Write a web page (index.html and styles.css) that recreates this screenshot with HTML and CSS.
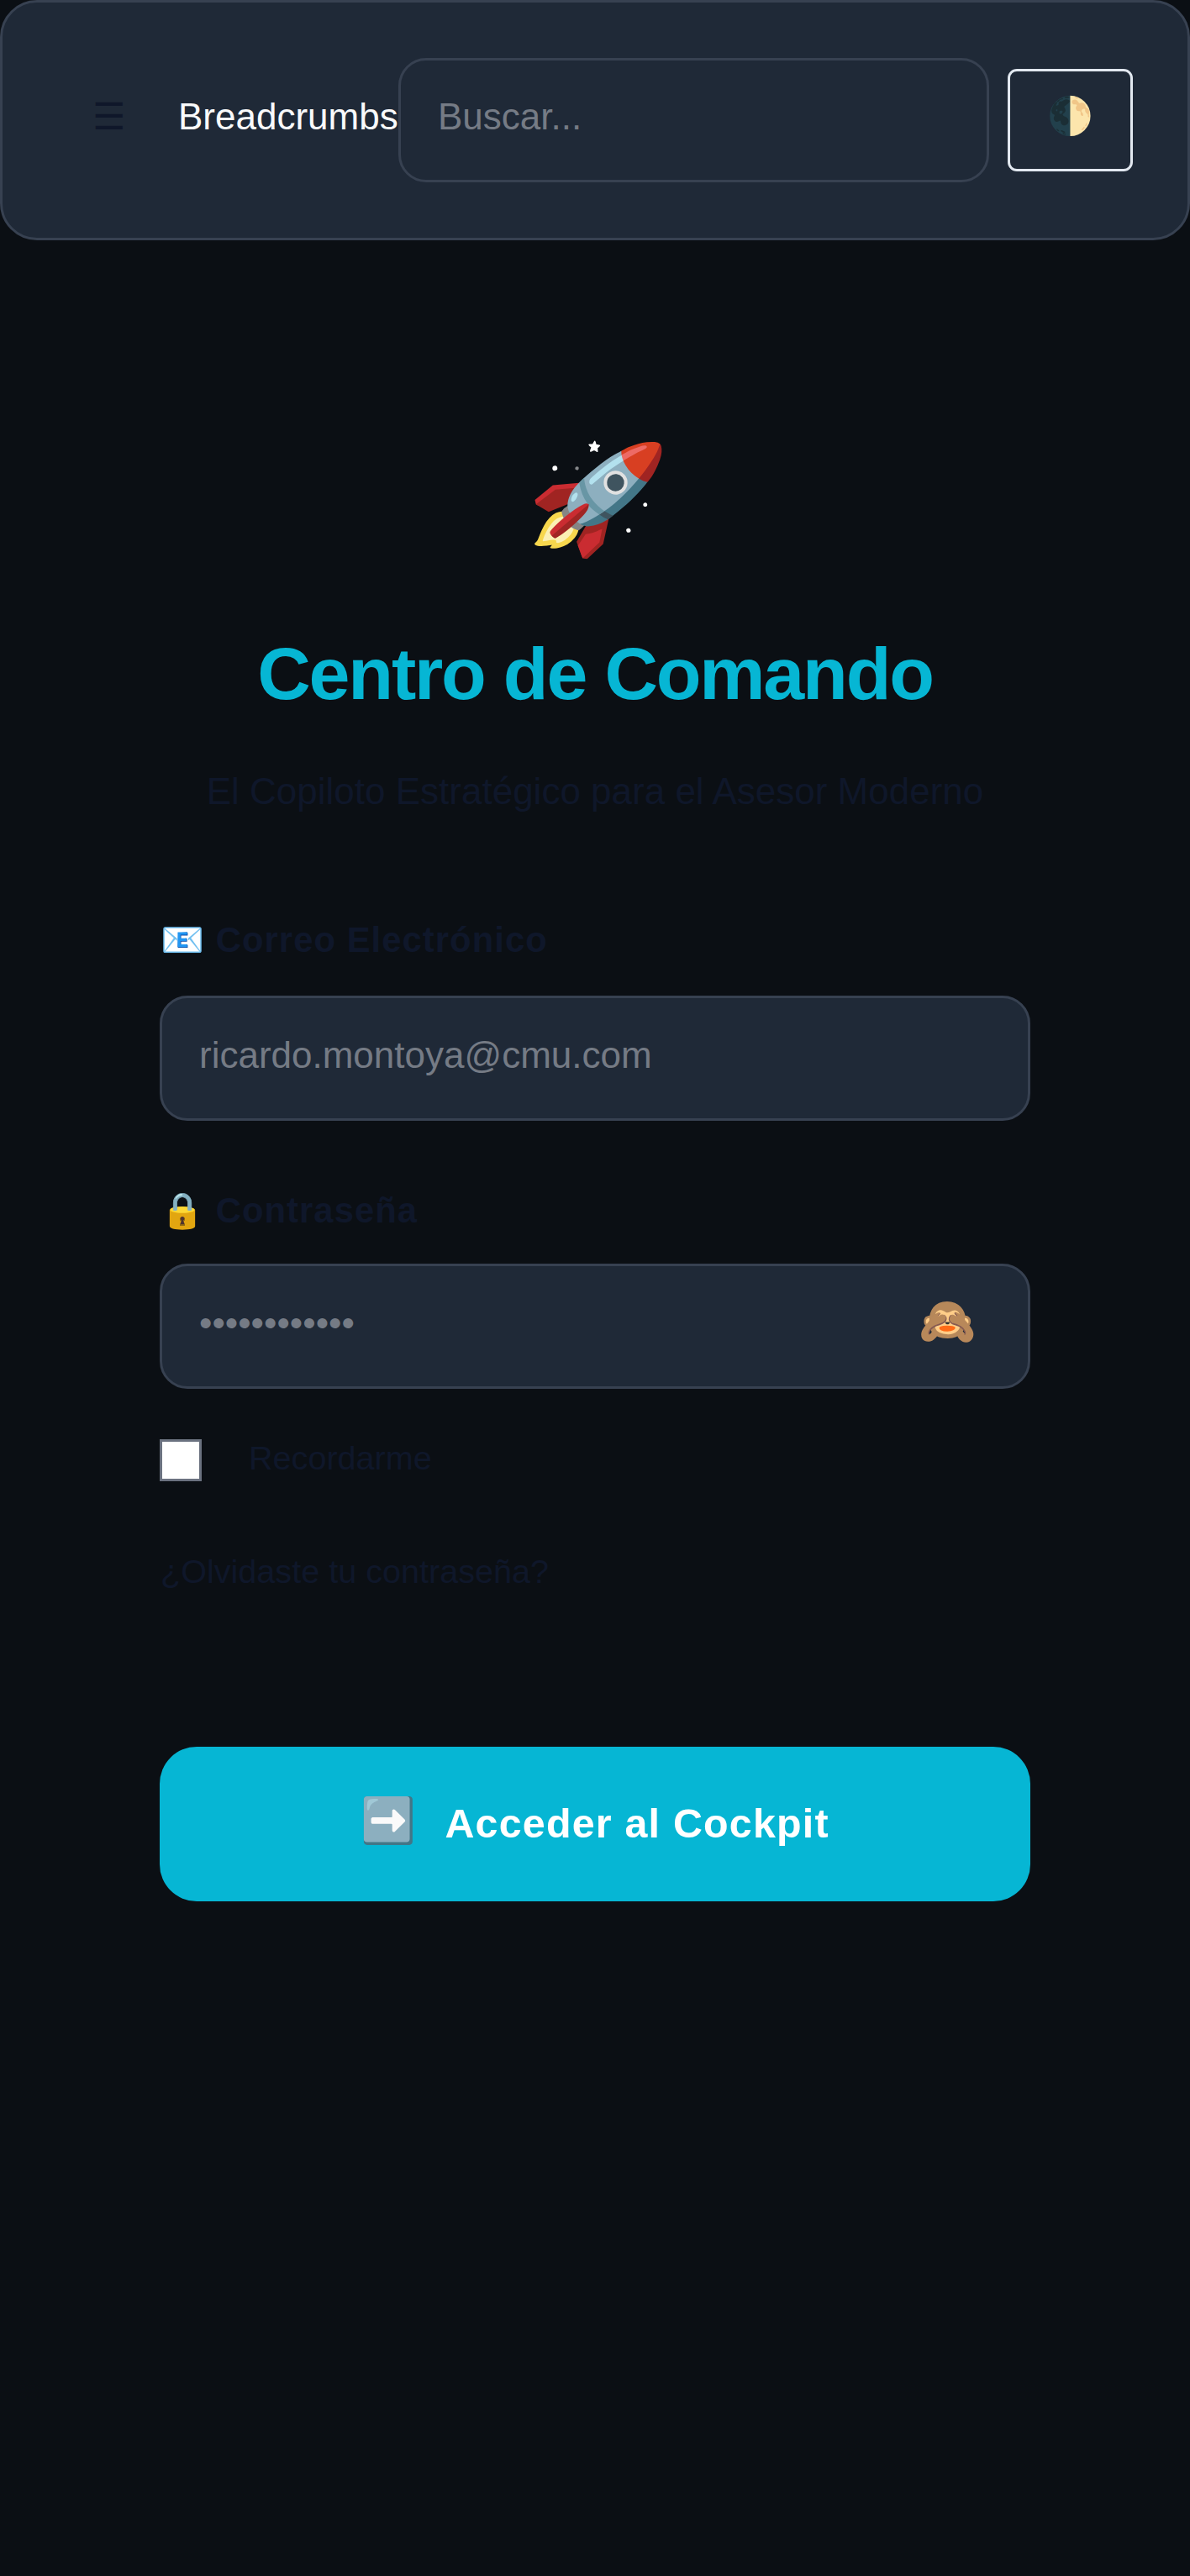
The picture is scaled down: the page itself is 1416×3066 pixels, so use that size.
FILE: index.html
```html
<!DOCTYPE html>
<html lang="es">
<head>
<meta charset="utf-8">
<title>Centro de Comando</title>
<link rel="stylesheet" href="styles.css">
</head>
<body>
<header class="topbar">
  <button class="menu" type="button">☰</button>
  <div class="crumbs">Breadcrumbs</div>
  <input class="field search" type="text" placeholder="Buscar...">
  <button class="theme" type="button">🌓</button>
</header>
<main class="login">
  <div class="rocket">🚀</div>
  <h1 class="title">Centro de Comando</h1>
  <p class="subtitle">El Copiloto Estratégico para el Asesor Moderno</p>
  <form class="form">
    <label class="label" for="email">📧 Correo Electrónico</label>
    <input class="field" id="email" type="text" placeholder="ricardo.montoya@cmu.com">
    <label class="label label-pass" for="pass">🔒 Contraseña</label>
    <div class="pass">
      <input class="field" id="pass" type="password" placeholder="••••••••••••">
      <button class="peek" type="button">🙈</button>
    </div>
    <label class="remember"><input class="check" type="checkbox"><span class="remember-text">Recordarme</span></label>
    <a class="forgot">¿Olvidaste tu contraseña?</a>
    <button class="submit" type="button"><span class="arrow">➡️</span><span class="submit-text">Acceder al Cockpit</span></button>
  </form>
</main>
</body>
</html>
```
FILE: styles.css
```css
* { box-sizing: border-box; }
body {
  margin: 0;
  min-height: 3066px;
  background: #0b0f14;
  color: #0f172a;
  font-family: "Liberation Sans", Arial, sans-serif;
  font-size: 44px;
}
button, input { font: inherit; margin: 0; }
button { padding: 0; border: 0; background: none; color: #0f172a; }
.topbar {
  display: flex;
  align-items: center;
  height: 286px;
  padding: 0 65px 0 80px;
  border: 3px solid #374151;
  border-radius: 44px;
  background: #1f2937;
}
.menu { width: 93px; height: 60px; line-height: 52px; padding-bottom: 8px; }
.crumbs { flex: none; width: 262px; margin-left: 36px; line-height: 50px; color: #f9fafb; padding-bottom: 9px; }
.field {
  display: block;
  width: 100%;
  height: 149px;
  padding: 0 44px 8px;
  border: 3px solid #374151;
  border-radius: 33px;
  background: #1f2937;
  color: #f9fafb;
}
.field::placeholder { color: #757b85; opacity: 1; }
.search { flex: none; width: 703px; height: 148px; }
.theme {
  flex: none;
  width: 149px;
  height: 122px;
  margin-left: 22px;
  padding-bottom: 10px;
  border: 3px solid #e2e8f0;
  border-radius: 11px;
}
.login { width: 1036px; margin: 0 auto; text-align: center; }
.rocket {
  margin-top: 206px;
  height: 200px;
  padding-left: 4px;
  font-size: 132px;
  line-height: 200px;
  transform: rotate(5deg);
}
.title {
  margin: 60px 0 0;
  font-size: 88px;
  line-height: 100px;
  letter-spacing: -2.2px;
  color: #06b6d4;
  white-space: nowrap;
}
.subtitle { margin: 65px 0 0; line-height: 50px; color: #0f172a; white-space: nowrap; }
.form { display: flex; flex-direction: column; text-align: left; }
.label {
  margin-top: 127px;
  height: 50px;
  margin-bottom: 41px;
  padding-left: 1px;
  font-weight: 700;
  font-size: 41.8px;
  line-height: 50px;
  letter-spacing: 1.045px;
}
.label-pass { margin-top: 82px; margin-bottom: 38px; }
.pass { position: relative; }
.peek { position: absolute; right: 65px; top: 38px; font-size: 55px; line-height: 60px; }
.remember { display: flex; align-items: center; margin-top: 60px; font-size: 39.6px; height: 50px; }
.remember-text { padding-bottom: 5px; }
.check {
  appearance: none;
  width: 50px;
  height: 50px;
  margin-right: 56px;
  border: 3px solid #6b7280;
  background: #fff;
}
.forgot { margin-top: 84px; height: 46px; padding-left: 1px; line-height: 46px; font-size: 39.6px; }
.submit {
  display: flex;
  align-items: center;
  justify-content: center;
  gap: 33px;
  height: 184px;
  margin-top: 186px;
  border-radius: 44px;
  background: #06b6d4;
  color: #fff;
  font-weight: 700;
  font-size: 48.4px;
  letter-spacing: 1.21px;
}
.arrow { font-size: 52.8px; padding-bottom: 8px; }
.submit-text { padding-bottom: 3px; }
```
